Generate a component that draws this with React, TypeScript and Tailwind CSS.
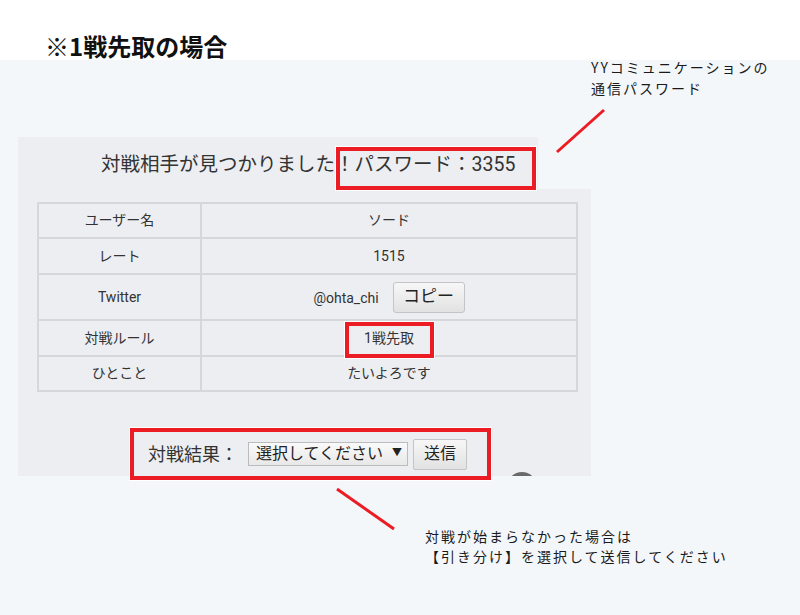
import React from "react";

const ui = { fontFamily: '"Roboto", "Noto Sans CJK JP", sans-serif' };
const jp = { fontFamily: '"Noto Sans CJK JP", sans-serif' };

function Row({ label, h, children }: { label: string; h: string; children: React.ReactNode }) {
  return (
    <tr className={h}>
      <td className="w-[163px] border-2 border-[#d6d7da] text-center text-[14px] text-[#333] p-0">{label}</td>
      <td className="border-2 border-[#d6d7da] text-center text-[14px] text-[#333] p-0">{children}</td>
    </tr>
  );
}

export default function App() {
  return (
    <div className="relative w-[800px] h-[615px] overflow-hidden bg-[#f4f7fa]" style={ui}>
      <div className="h-[60px] bg-white pl-[45px] pt-[32px]">
        <h1 className="text-[24px] leading-[28px] font-bold text-[#111]" style={jp}>
          ※1戦先取の場合
        </h1>
      </div>

      <div className="ml-[18px] mt-[77px] relative">
        <div className="w-[520px] h-[52px] bg-[#eceef1] pl-[83px] pt-[15px]">
          <div className="text-[19.5px] leading-[26px] text-[#333] whitespace-nowrap">
            対戦相手が見つかりました！パスワード：3355
          </div>
        </div>
        <div className="w-[573px] h-[287px] bg-[#eceef1] pt-[13px] pl-[19px]">
          <table className="w-[541px] border-collapse">
            <tbody>
              <Row label="ユーザー名" h="h-[35px]">ソード</Row>
              <Row label="レート" h="h-[36px]">1515</Row>
              <Row label="Twitter" h="h-[46px]">
                <div className="flex items-center justify-center">
                  <span className="mt-[3px]">@ohta_chi</span>
                  <button className="ml-[14px] w-[72px] h-[31px] rounded-[3px] border border-[#c4c4c4] bg-gradient-to-b from-[#f7f7f7] to-[#e2e2e2] text-[17px] text-[#222]">
                    コピー
                  </button>
                </div>
              </Row>
              <Row label="対戦ルール" h="h-[36px]">1戦先取</Row>
              <Row label="ひとこと" h="h-[35px]">たいよろです</Row>
            </tbody>
          </table>
          <div className="mt-[46px] ml-[111px] h-[32px] flex items-center">
            <span className="text-[18px] text-[#333] whitespace-nowrap">対戦結果：</span>
            <div className="ml-[10px] w-[160px] h-[24px] border border-[#bcbcbc] bg-gradient-to-b from-[#fafafa] to-[#e8e8e8] flex items-center pl-[7px] pr-[5px] text-[16px] text-[#222]">
              <span className="flex-1 whitespace-nowrap">選択してください</span>
              <span className="text-[10px] mb-[3px]">▼</span>
            </div>
            <button className="ml-[5px] w-[54px] h-[31px] rounded-[2px] border border-[#c4c4c4] bg-gradient-to-b from-[#f7f7f7] to-[#e2e2e2] text-[16px] text-[#222]">
              送信
            </button>
          </div>
        </div>

        <div className="absolute left-[489px] top-[335px] w-[30px] h-[4px] overflow-hidden">
          <div className="w-[30px] h-[30px] rounded-full bg-[#6a6a6a]" />
        </div>

        <div className="absolute left-[318px] top-[10px] w-[200px] h-[43px] border-4 border-[#ec1c24] shadow-[0_0_0_1px_#fff]" />
        <div className="absolute left-[327px] top-[185px] w-[89px] h-[36px] border-4 border-[#ec1c24] shadow-[0_0_0_1px_#fff]" />
        <div className="absolute left-[112px] top-[291px] w-[361px] h-[52px] border-4 border-[#ec1c24] shadow-[0_0_0_1px_#fff]" />
      </div>

      <div className="absolute left-[591px] top-[57px] text-[14px] leading-[21px] tracking-[2px] text-[#1a1a1a] whitespace-nowrap" style={jp}>
        <div>YYコミュニケーションの</div>
        <div>通信パスワード</div>
      </div>

      <div className="absolute left-[425px] top-[526px] text-[14px] leading-[20px] tracking-[2px] text-[#1a1a1a] whitespace-nowrap" style={jp}>
        <div>対戦が始まらなかった場合は</div>
        <div>【引き分け】を選択して送信してください</div>
      </div>

      <svg className="absolute left-0 top-0 pointer-events-none" width="800" height="615">
        <line x1="604" y1="110" x2="557" y2="152" stroke="#ec1c24" strokeWidth="3" />
        <line x1="337" y1="489" x2="394" y2="529" stroke="#ec1c24" strokeWidth="3" />
      </svg>
    </div>
  );
}
